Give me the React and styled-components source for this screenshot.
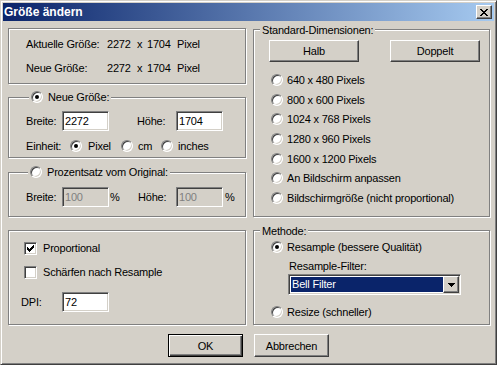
import React from 'react';
import styled, { createGlobalStyle, css } from 'styled-components';

const GlobalStyle = createGlobalStyle`
  html, body {
    margin: 0;
    padding: 0;
    background: #d4d0c8;
  }
  body {
    font-family: "Liberation Sans", Arial, sans-serif;
    font-size: 11px;
    letter-spacing: -0.2px;
    color: #000;
  }
`;

const Window = styled.div`
  box-sizing: border-box;
  width: 497px;
  height: 365px;
  padding: 2px;
  border: 1px solid;
  border-color: #d4d0c8 #404040 #404040 #d4d0c8;
  box-shadow: inset 1px 1px 0 #fff, inset -1px -1px 0 #808080;
  background: #d4d0c8;
  display: flex;
  flex-direction: column;
`;

const TitleBar = styled.div`
  flex: none;
  height: 18px;
  display: flex;
  align-items: center;
  justify-content: space-between;
  padding: 0 2px 0 1px;
  background: linear-gradient(to right, #0a246a, #a6caf0);
`;

const Title = styled.span`
  color: #fff;
  font-weight: bold;
  font-size: 12px;
  letter-spacing: 0;
  white-space: nowrap;
`;

const raised = css`
  border: 1px solid;
  border-color: #fff #404040 #404040 #fff;
  box-shadow: inset -1px -1px 0 #808080, inset 1px 1px 0 #d4d0c8;
`;

const sunken = css`
  border: 1px solid;
  border-color: #808080 #fff #fff #808080;
  box-shadow: inset 1px 1px 0 #404040, inset -1px -1px 0 #d4d0c8;
`;

const CloseButton = styled.div`
  box-sizing: border-box;
  width: 16px;
  height: 14px;
  background: #d4d0c8;
  ${raised};
  display: flex;
  align-items: center;
  justify-content: center;
`;

const Body = styled.div`
  display: grid;
  grid-template-columns: 238px 237px;
  column-gap: 7px;
  row-gap: 13px;
  align-items: start;
  padding: 7px 0 0 5px;
`;

const Stack = styled.div`
  display: flex;
  flex-direction: column;
`;

const Group = styled.div`
  box-sizing: border-box;
  height: ${p => p.$h}px;
  margin-top: ${p => p.$mt || 0}px;
  border: 1px solid #808080;
  box-shadow: 1px 1px 0 #fff, inset 1px 1px 0 #fff;
  display: flex;
  flex-direction: column;
  padding-top: ${p => p.$pt || 0}px;
`;

const Caption = styled.div`
  align-self: flex-start;
  display: flex;
  align-items: center;
  gap: 5px;
  height: 14px;
  line-height: 14px;
  margin: -${p => p.$up || 7}px 0 0 ${p => p.$ml}px;
  padding: 0 2px;
  background: #d4d0c8;
  white-space: nowrap;
`;

const InfoGrid = styled.div`
  display: grid;
  grid-template-columns: 81px 30px 10px 30px auto;
  row-gap: 10px;
  line-height: 14px;
  padding: 8px 0 0 17px;
  white-space: nowrap;
`;

const FieldRow = styled.div`
  display: grid;
  grid-template-columns: ${p => p.$cols};
  align-items: center;
  height: ${p => p.$h || 20}px;
  margin: ${p => p.$mt || 0}px 0 0 ${p => p.$ml || 0}px;
  padding-left: ${p => p.$pl ?? 17}px;
  white-space: nowrap;
`;

const Unit = styled.span`
  padding-left: ${p => p.$pl}px;
`;

const TextBox = styled.input`
  box-sizing: border-box;
  width: 47px;
  height: 20px;
  margin: 0;
  padding: 0 0 0 2px;
  font: inherit;
  letter-spacing: inherit;
  outline: none;
  ${sunken};
  background: ${p => (p.$off ? '#d4d0c8' : '#fff')};
  color: ${p => (p.$off ? '#808080' : '#000')};
`;

const Option = styled.div`
  display: flex;
  align-items: center;
  gap: ${p => p.$gap ?? 5}px;
  height: 14px;
  line-height: 14px;
  white-space: nowrap;
  margin-top: ${p => p.$mt || 0}px;
  padding-left: ${p => p.$pl || 0}px;
`;

const Radio = styled.span`
  box-sizing: border-box;
  flex: none;
  width: 12px;
  height: 12px;
  border-radius: 50%;
  ${sunken};
  background: #fff;
  display: flex;
  align-items: center;
  justify-content: center;
  &::after {
    content: '';
    width: 4px;
    height: 4px;
    border-radius: 50%;
    background: ${p => (p.$on ? '#000' : 'transparent')};
  }
`;

const CheckBox = styled.span`
  box-sizing: border-box;
  flex: none;
  width: 13px;
  height: 13px;
  ${sunken};
  background: #fff;
  display: flex;
`;

const RadioList = styled.div`
  display: flex;
  flex-direction: column;
  gap: 5.67px;
  margin-top: 11px;
  padding-left: 17px;
`;

const CheckList = styled.div`
  display: flex;
  flex-direction: column;
  gap: 10px;
  padding-left: 15px;
`;

const ButtonPair = styled.div`
  display: flex;
  gap: 31px;
  margin-top: 3px;
  padding-left: 15px;
`;

const PushButton = styled.button`
  box-sizing: border-box;
  width: ${p => p.$w}px;
  height: ${p => p.$h}px;
  margin: 0;
  padding: 0;
  font: inherit;
  letter-spacing: inherit;
  color: #000;
  background: #d4d0c8;
  ${raised};
  ${p =>
    p.$default &&
    css`
      border: 1px solid #000;
      box-shadow: inset 1px 1px 0 #fff, inset -1px -1px 0 #404040, inset -2px -2px 0 #808080;
    `}
`;

const SubLabel = styled.div`
  line-height: 14px;
  margin: 5px 0 0 35px;
`;

const Combo = styled.div`
  box-sizing: border-box;
  width: 173px;
  height: 21px;
  margin: 1px 0 0 34px;
  padding: 1px;
  ${sunken};
  background: #fff;
  display: flex;
`;

const ComboField = styled.div`
  flex: 1;
  margin: 1px 0 1px 1px;
  padding-left: 1px;
  background: #0a246a;
  color: #fff;
  line-height: 15px;
`;

const ComboArrow = styled.div`
  box-sizing: border-box;
  flex: none;
  width: 16px;
  height: 17px;
  background: #d4d0c8;
  ${raised};
  display: flex;
  align-items: center;
  justify-content: center;
`;

const ButtonRow = styled.div`
  display: flex;
  justify-content: center;
  gap: 11px;
  margin-top: 9px;
`;

const CheckMark = () => (
  <svg width="11" height="11" viewBox="0 0 11 11">
    <path
      fill="#000"
      d="M2 4h1v3h-1z M3 5h1v3h-1z M4 6h1v3h-1z M5 5h1v3h-1z M6 4h1v3h-1z M7 3h1v3h-1z M8 2h1v3h-1z"
    />
  </svg>
);

const sizes = [
  '640 x 480 Pixels',
  '800 x 600 Pixels',
  '1024 x 768 Pixels',
  '1280 x 960 Pixels',
  '1600 x 1200 Pixels',
  'An Bildschirm anpassen',
  'Bildschirmgröße (nicht proportional)',
];

const App = () => {
  return (
    <>
      <GlobalStyle />
      <Window>
        <TitleBar>
          <Title>Größe ändern</Title>
          <CloseButton>
            <svg width="8" height="7" viewBox="0 0 8 7">
              <path
                fill="#000"
                d="M0 0h2v1h1v1h2v-1h1v-1h2v1h-1v1h-1v1h-1v1h1v1h1v1h1v1h-2v-1h-1v-1h-2v1h-1v1h-2v-1h1v-1h1v-1h1v-1h-1v-1h-1v-1h-1z"
              />
            </svg>
          </CloseButton>
        </TitleBar>

        <Body>
          <Stack>
            <Group $h={56}>
              <InfoGrid>
                <span>Aktuelle Größe:</span>
                <span>2272</span>
                <span>x</span>
                <span>1704</span>
                <span>Pixel</span>
                <span>Neue Größe:</span>
                <span>2272</span>
                <span>x</span>
                <span>1704</span>
                <span>Pixel</span>
              </InfoGrid>
            </Group>

            <Group $h={61} $mt={13}>
              <Caption $up={8} $ml={20}>
                <Radio $on />
                Neue Größe:
              </Caption>
              <FieldRow $mt={7} $cols="36px 47px 28px 39px 47px">
                <span>Breite:</span>
                <TextBox readOnly defaultValue="2272" />
                <span />
                <span>Höhe:</span>
                <TextBox readOnly defaultValue="1704" />
              </FieldRow>
              <FieldRow $mt={8} $h={14} $cols="44px 51px 40px auto">
                <span>Einheit:</span>
                <Option $gap={6}>
                  <Radio $on />
                  Pixel
                </Option>
                <Option>
                  <Radio />
                  cm
                </Option>
                <Option>
                  <Radio />
                  inches
                </Option>
              </FieldRow>
            </Group>

            <Group $h={45} $mt={14}>
              <Caption $up={8} $ml={19}>
                <Radio />
                Prozentsatz vom Original:
              </Caption>
              <FieldRow $mt={8} $cols="36px 47px 29px 38px 47px auto">
                <span>Breite:</span>
                <TextBox readOnly $off defaultValue="100" />
                <Unit $pl={1}>%</Unit>
                <span>Höhe:</span>
                <TextBox readOnly $off defaultValue="100" />
                <Unit $pl={2}>%</Unit>
              </FieldRow>
            </Group>
          </Stack>

          <Group $h={188} $mt={1}>
            <Caption $ml={6}>Standard-Dimensionen:</Caption>
            <ButtonPair>
              <PushButton $w={90} $h={22}>Halb</PushButton>
              <PushButton $w={90} $h={22}>Doppelt</PushButton>
            </ButtonPair>
            <RadioList>
              {sizes.map(s => (
                <Option key={s} $gap={4}>
                  <Radio />
                  {s}
                </Option>
              ))}
            </RadioList>
          </Group>

          <Group $h={95} $pt={10}>
            <CheckList>
              <Option $gap={6}>
                <CheckBox>
                  <CheckMark />
                </CheckBox>
                Proportional
              </Option>
              <Option $gap={6}>
                <CheckBox />
                Schärfen nach Resample
              </Option>
            </CheckList>
            <FieldRow $mt={13} $pl={12} $cols="41px 47px">
              <span>DPI:</span>
              <TextBox readOnly defaultValue="72" />
            </FieldRow>
          </Group>

          <Group $h={95}>
            <Caption $ml={6}>Methode:</Caption>
            <Option $mt={2} $pl={17} $gap={4}>
              <Radio $on />
              Resample (bessere Qualität)
            </Option>
            <SubLabel>Resample-Filter:</SubLabel>
            <Combo>
              <ComboField>Bell Filter</ComboField>
              <ComboArrow>
                <svg width="7" height="4" viewBox="0 0 7 4">
                  <path fill="#000" d="M0 0h7v1h-1v1h-1v1h-1v1h-1v-1h-1v-1h-1v-1h-1z" />
                </svg>
              </ComboArrow>
            </Combo>
            <Option $mt={10} $pl={17} $gap={4}>
              <Radio />
              Resize (schneller)
            </Option>
          </Group>
        </Body>

        <ButtonRow>
          <PushButton $default $w={75} $h={23}>OK</PushButton>
          <PushButton $w={75} $h={23}>Abbrechen</PushButton>
        </ButtonRow>
      </Window>
    </>
  );
};

export default App;
